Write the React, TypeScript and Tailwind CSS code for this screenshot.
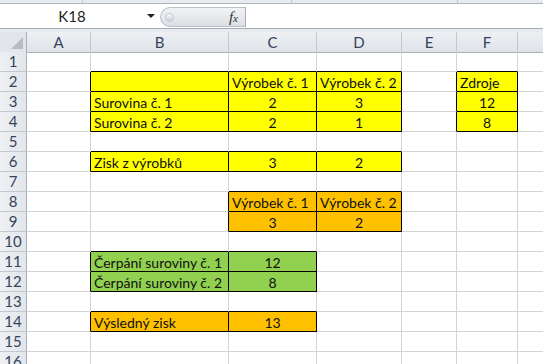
import React from 'react';

type Cell = { text?: string; fill: string; align?: 'left' | 'center' };

const YELLOW = 'bg-[#ffff00]';
const ORANGE = 'bg-[#ffc000]';
const GREEN = 'bg-[#92d050]';

const columns = ['A', 'B', 'C', 'D', 'E', 'F', 'G'];

// key = `${row},${colIndex}` (colIndex 0 = A)
const cells: Record<string, Cell> = {
  '2,1': { fill: YELLOW },
  '2,2': { text: 'Výrobek č. 1', fill: YELLOW },
  '2,3': { text: 'Výrobek č. 2', fill: YELLOW },
  '2,5': { text: 'Zdroje', fill: YELLOW },
  '3,1': { text: 'Surovina č. 1', fill: YELLOW },
  '3,2': { text: '2', fill: YELLOW, align: 'center' },
  '3,3': { text: '3', fill: YELLOW, align: 'center' },
  '3,5': { text: '12', fill: YELLOW, align: 'center' },
  '4,1': { text: 'Surovina č. 2', fill: YELLOW },
  '4,2': { text: '2', fill: YELLOW, align: 'center' },
  '4,3': { text: '1', fill: YELLOW, align: 'center' },
  '4,5': { text: '8', fill: YELLOW, align: 'center' },
  '6,1': { text: 'Zisk z výrobků', fill: YELLOW },
  '6,2': { text: '3', fill: YELLOW, align: 'center' },
  '6,3': { text: '2', fill: YELLOW, align: 'center' },
  '8,2': { text: 'Výrobek č. 1', fill: ORANGE },
  '8,3': { text: 'Výrobek č. 2', fill: ORANGE },
  '9,2': { text: '3', fill: ORANGE, align: 'center' },
  '9,3': { text: '2', fill: ORANGE, align: 'center' },
  '11,1': { text: 'Čerpání suroviny č. 1', fill: GREEN },
  '11,2': { text: '12', fill: GREEN, align: 'center' },
  '12,1': { text: 'Čerpání suroviny č. 2', fill: GREEN },
  '12,2': { text: '8', fill: GREEN, align: 'center' },
  '14,1': { text: 'Výsledný zisk', fill: ORANGE },
  '14,2': { text: '13', fill: ORANGE, align: 'center' },
};

const has = (r: number, c: number) => Boolean(cells[`${r},${c}`]);

const rows = Array.from({ length: 16 }, (_, i) => i + 1);

const FormulaBar: React.FC = () => (
  <div className="h-[32px] flex flex-col bg-white">
    {/* ribbon edge */}
    <div className="h-[4px] flex bg-[#e7eaee] border-b border-[#aeb5bf]">
      <div className="w-[83px] border-r border-[#c3c8cf]" />
      <div className="w-[209px] border-r border-[#c3c8cf]" />
      <div className="w-[166px] border-r border-[#c3c8cf]" />
    </div>
    <div className="h-[24px] flex items-center">
      <div className="w-[160px] h-full flex items-center relative">
        <span className="w-[144px] text-center text-[15px] text-[#1e1e1e]">K18</span>
        <span className="absolute left-[147px] top-[10px] w-0 h-0 border-l-[4px] border-r-[4px] border-t-[4px] border-l-transparent border-r-transparent border-t-[#222]" />
      </div>
      <div className="w-[85px] h-[20px] mt-[2px] flex items-center rounded-l-full border border-r-0 border-[#b9bfc7] bg-gradient-to-b from-[#f1f3f5] to-[#dcdfe4]">
        <span className="ml-[4px] w-[9px] h-[9px] rounded-full bg-gradient-to-b from-[#fafbfc] to-[#c9ced5] border border-[#c5cad1]" />
        <span className="ml-auto mr-[7px] italic font-['Liberation_Serif',serif] text-[15px] text-[#333] leading-none">f<span className="text-[11px]">x</span></span>
      </div>
      <div className="w-px h-[20px] mt-[2px] bg-[#a9afb8]" />
      <div className="flex-1" />
    </div>
    <div className="h-[4px] border-t border-[#a6adb6] bg-[#e7eaee]" />
  </div>
);

export default function App() {
  return (
    <div className="w-[543px] h-[364px] overflow-hidden bg-white font-['Lato',sans-serif] text-[#111]">
      <FormulaBar />
      <div className="grid w-max grid-cols-[27px_64px_138px_88px_85px_55px_61px_80px] auto-rows-[20px]">
        {/* header row */}
        <div className="h-[21px] bg-[#e2e6ea] border-r border-b border-[#a9b0b8] relative">
          <svg className="absolute right-[3px] bottom-[3px]" width="12" height="12" viewBox="0 0 12 12">
            <polygon points="12,0 12,12 0,12" fill="#b7bcc3" />
          </svg>
        </div>
        {columns.map((c) => (
          <div
            key={c}
            className="h-[21px] bg-gradient-to-b from-[#eef0f3] to-[#dfe3e8] border-r border-b border-r-[#c3c8ce] border-b-[#a9b0b8] flex items-center justify-center text-[15px] text-[#34445c]"
          >
            {c}
          </div>
        ))}
        {rows.map((r) => (
          <React.Fragment key={r}>
            <div className="-mt-px h-[20px] translate-y-px bg-gradient-to-r from-[#eef0f3] to-[#e2e6ea] border-r border-b border-r-[#a9b0b8] border-b-[#c3c8ce] flex items-center justify-center text-[15px] text-[#34445c]">
              {r}
            </div>
            {columns.map((_, ci) => {
              const cell = cells[`${r},${ci}`];
              const blackRight = has(r, ci) || has(r, ci + 1);
              const blackBottom = has(r, ci) || has(r + 1, ci);
              return (
                <div
                  key={ci}
                  className={`-mt-px h-[20px] translate-y-px border-r border-b flex items-center pt-[2px] text-[14px] whitespace-nowrap ${
                    blackRight ? 'border-r-black' : 'border-r-[#d4d4d4]'
                  } ${blackBottom ? 'border-b-black' : 'border-b-[#d4d4d4]'} ${cell ? cell.fill : ''} ${
                    cell?.align === 'center' ? 'justify-center' : 'pl-[3px]'
                  }`}
                >
                  {cell?.text}
                </div>
              );
            })}
          </React.Fragment>
        ))}
      </div>
    </div>
  );
}
